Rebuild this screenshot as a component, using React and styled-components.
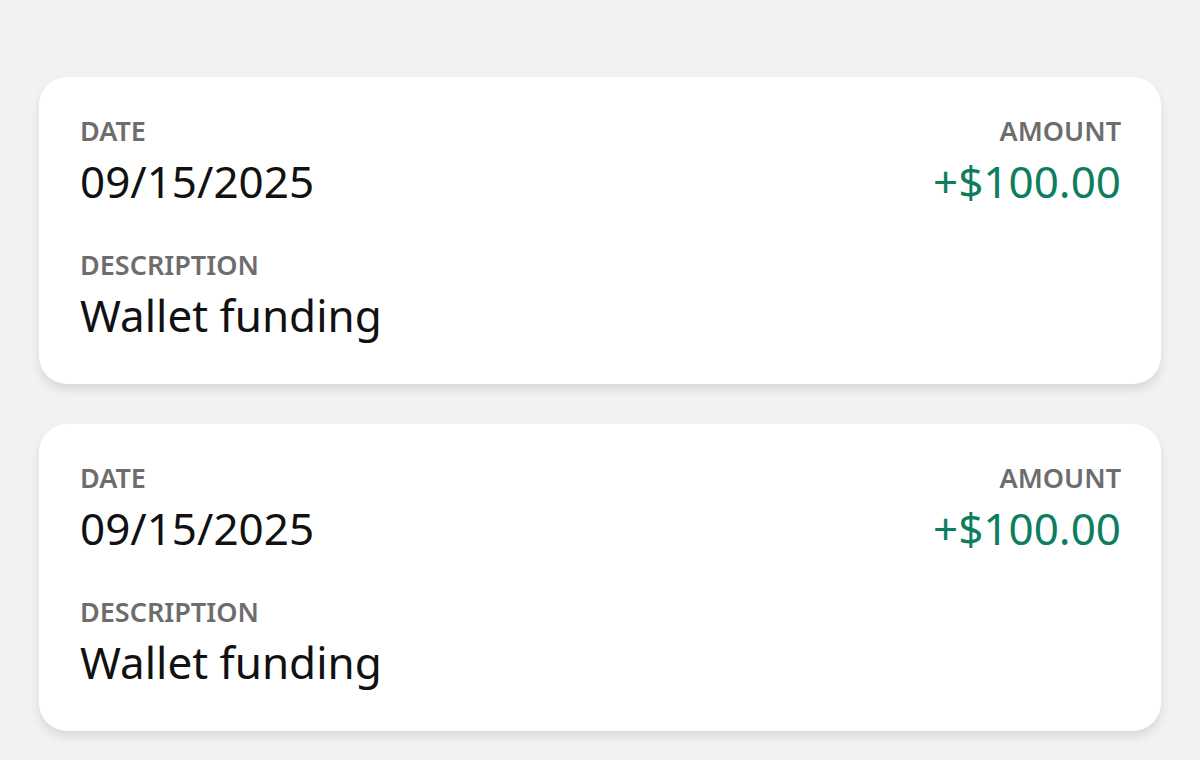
import React from "react";
import styled, { createGlobalStyle } from "styled-components";

const GlobalStyle = createGlobalStyle`
  html, body {
    margin: 0;
    padding: 0;
    background: #f2f2f2;
  }
  body {
    font-family: "Noto Sans", "Open Sans", sans-serif;
    overflow: hidden;
  }
`;

const transactions = [
  { id: 1, date: "09/15/2025", amount: "+$100.00", description: "Wallet funding" },
  { id: 2, date: "09/15/2025", amount: "+$100.00", description: "Wallet funding" },
];

const App = () => {
  return (
    <Page>
      <GlobalStyle />
      {transactions.map((tx) => (
        <Card key={tx.id}>
          <Row>
            <Field>
              <Label>DATE</Label>
              <Value>{tx.date}</Value>
            </Field>
            <Field $align="right">
              <Label>AMOUNT</Label>
              <Value $tone="credit">{tx.amount}</Value>
            </Field>
          </Row>
          <Field>
            <Label>DESCRIPTION</Label>
            <Value>{tx.description}</Value>
          </Field>
        </Card>
      ))}
    </Page>
  );
};

const Page = styled.main`
  height: 760px;
  box-sizing: border-box;
  padding: 77px 39px 0;
  display: flex;
  flex-direction: column;
  gap: 40px;
`;

const Card = styled.section`
  background: #fff;
  border-radius: 28px;
  padding: 37px 40px 42px 41px;
  display: flex;
  flex-direction: column;
  gap: 40px;
  box-shadow: 0 6px 10px rgba(0, 0, 0, 0.1);
`;

const Row = styled.div`
  display: flex;
  justify-content: space-between;
  align-items: flex-start;
`;

const Field = styled.div`
  display: flex;
  flex-direction: column;
  gap: 6px;
  text-align: ${(p) => (p.$align === "right" ? "right" : "left")};
`;

const Label = styled.span`
  font-size: 27px;
  line-height: 34px;
  font-weight: 600;
  color: #6d6d6d;
`;

const Value = styled.span`
  font-size: 44px;
  line-height: 54px;
  font-weight: 400;
  color: ${(p) => (p.$tone === "credit" ? "#0e7d5f" : "#111")};
`;

export default App;
